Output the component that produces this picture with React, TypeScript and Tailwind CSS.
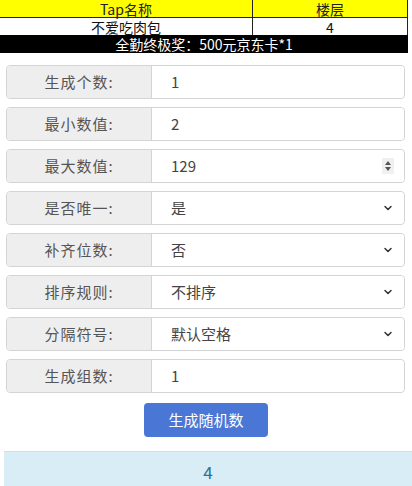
import { ChevronDown } from "lucide-react";

const font = { fontFamily: '"Noto Sans CJK SC", "Noto Sans", sans-serif' };

type Row = { label: string; value: string; kind: "text" | "number" | "select" };

const rows: Row[] = [
  { label: "生成个数:", value: "1", kind: "text" },
  { label: "最小数值:", value: "2", kind: "text" },
  { label: "最大数值:", value: "129", kind: "number" },
  { label: "是否唯一:", value: "是", kind: "select" },
  { label: "补齐位数:", value: "否", kind: "select" },
  { label: "排序规则:", value: "不排序", kind: "select" },
  { label: "分隔符号:", value: "默认空格", kind: "select" },
  { label: "生成组数:", value: "1", kind: "text" },
];

function Spinner() {
  return (
    <div className="flex h-[16px] w-[12px] flex-col items-center justify-center gap-[2px] bg-[#f0f0f0]">
      <svg width="6" height="4" viewBox="0 0 6 4">
        <path d="M0 4 L3 0 L6 4 Z" fill="#555" />
      </svg>
      <svg width="6" height="4" viewBox="0 0 6 4">
        <path d="M0 0 L3 4 L6 0 Z" fill="#555" />
      </svg>
    </div>
  );
}

function FormRow({ row }: { row: Row }) {
  return (
    <div className="flex h-[34px] rounded-[4px] border border-[#d4d4d4] text-[15px] text-[#555]">
      <div className="flex w-[145px] shrink-0 items-center justify-center rounded-l-[4px] border-r border-[#d4d4d4] bg-[#eeeeee] tracking-[1px]">
        {row.label}
      </div>
      <div className="flex flex-1 items-center justify-between rounded-r-[4px] bg-white pl-[19px] pr-[10px]">
        <span className="text-[#444]">{row.value}</span>
        {row.kind === "number" && <Spinner />}
        {row.kind === "select" && (
          <ChevronDown className="h-[12px] w-[12px] text-[#333]" strokeWidth={3} />
        )}
      </div>
    </div>
  );
}

export default function App() {
  return (
    <div className="h-[486px] w-[412px] overflow-hidden bg-white" style={font}>
      <div className="w-[408px] text-[14px] leading-none">
        <div className="flex h-[18px] border-b border-[#222] bg-[#ffff00] text-[#222]">
          <div className="flex w-[253px] items-center justify-center border-r border-[#222]">Tap名称</div>
          <div className="flex flex-1 items-center justify-center border-r border-[#222]">楼层</div>
        </div>
        <div className="flex h-[17px] text-[#111]">
          <div className="flex w-[253px] items-center justify-center border-r border-[#222]">不爱吃肉包</div>
          <div className="flex flex-1 items-center justify-center border-r border-[#222]">4</div>
        </div>
        <div className="flex h-[18px] items-center justify-center bg-black text-white">
          全勤终极奖：500元京东卡*1
        </div>
      </div>

      <div className="flex flex-col gap-[8px] pl-[6px] pr-[7px] pt-[12px]">
        {rows.map((row) => (
          <FormRow key={row.label} row={row} />
        ))}
      </div>

      <div className="flex justify-center pt-[10px]">
        <button className="h-[34px] w-[124px] rounded-[4px] bg-[#4a77d6] text-[15px] text-white">
          生成随机数
        </button>
      </div>

      <div className="ml-[4px] mt-[14px] flex h-[40px] items-center justify-center border-t border-[#c5e2ee] bg-[#d9edf7] text-[17px] text-[#31708f]">
        4
      </div>
    </div>
  );
}
